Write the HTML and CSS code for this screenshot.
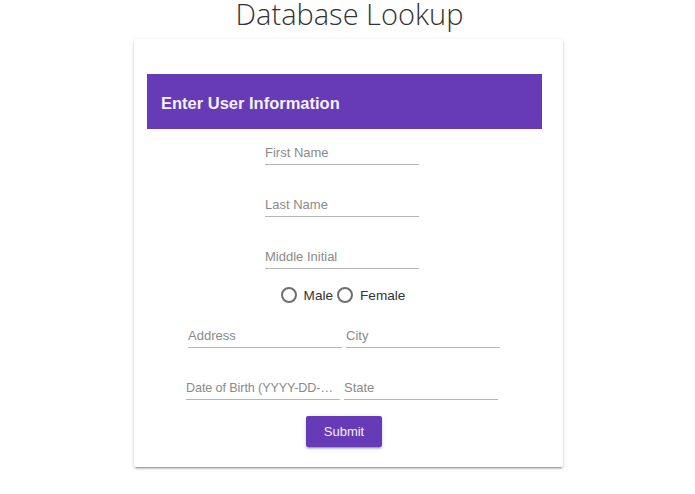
FILE: index.html
```html
<!DOCTYPE html>
<html>
<head>
<meta charset="utf-8">
<link rel="stylesheet" href="styles.css">
</head>
<body>
<h1 class="title">Database Lookup</h1>
<div class="card">
  <div class="card-header">Enter User Information</div>
  <div class="form">
    <div class="field first"><span class="label">First Name</span></div>
    <div class="field gap"><span class="label">Last Name</span></div>
    <div class="field gap"><span class="label">Middle Initial</span></div>
    <div class="radios">
      <span class="radio"></span><span class="radio-label">Male</span>
      <span class="radio"></span><span class="radio-label">Female</span>
    </div>
    <div class="pair pair-a">
      <div class="field"><span class="label">Address</span></div>
      <div class="field"><span class="label">City</span></div>
    </div>
    <div class="pair pair-b">
      <div class="field dob"><span class="label">Date of Birth (YYYY-DD-MM)</span></div>
      <div class="field"><span class="label">State</span></div>
    </div>
    <button class="submit">Submit</button>
  </div>
</div>
</body>
</html>
```
FILE: styles.css
```css
html, body {
  margin: 0;
  padding: 0;
  background: #ffffff;
}
body {
  font-family: "Liberation Sans", Arial, sans-serif;
  width: 695px;
  height: 494px;
  overflow: hidden;
}
.title {
  margin: 0;
  height: 39px;
  font-family: "Open Sans", sans-serif;
  font-weight: 300;
  font-size: 29px;
  line-height: 28px;
  color: #333;
  text-align: center;
  padding-left: 4px;
  box-sizing: border-box;
}
.card {
  margin-left: 134px;
  width: 429px;
  height: 428px;
  box-sizing: border-box;
  padding: 35px 21px 0 13px;
  background: #fff;
  border-radius: 2px;
  box-shadow: 0 2px 2px rgba(0,0,0,0.14), 0 1px 5px rgba(0,0,0,0.12), 0 3px 1px -2px rgba(0,0,0,0.2);
}
.card-header {
  height: 55px;
  box-sizing: border-box;
  padding-top: 3px;
  background: #673ab7;
  color: #f4f0fa;
  font-size: 16.5px;
  font-weight: 700;
  line-height: 52px;
  padding-left: 14px;
}
.form {
  display: flex;
  flex-direction: column;
  align-items: center;
  padding-right: 5px;
}
.field {
  width: 154px;
  height: 21px;
  box-sizing: border-box;
  padding-top: 1px;
  padding-bottom: 3px;
  border-bottom: 1px solid #b5b5b5;
  font-size: 13px;
  line-height: 16px;
  color: #8a8a8a;
  white-space: nowrap;
  overflow: hidden;
  text-overflow: ellipsis;
}
.field .label {
  white-space: nowrap;
}
.dob {
  font-size: 12.6px;
  letter-spacing: -0.1px;
}
.first {
  margin-top: 15px;
}
.gap {
  margin-top: 31px;
}
.radios {
  margin-top: 18px;
  height: 16px;
  display: flex;
  align-items: center;
  font-size: 13.6px;
  color: #333;
  margin-left: 6px;
}
.radio {
  width: 16px;
  height: 16px;
  box-sizing: border-box;
  border: 2px solid #6e6e6e;
  border-radius: 50%;
  margin-right: 7px;
}
.radio-label {
  margin-right: 4px;
}
.pair {
  display: flex;
  gap: 4px;
}
.pair-a {
  margin-top: 24px;
  margin-left: 4px;
}
.pair-b {
  margin-top: 31px;
}
.submit {
  margin-top: 16px;
  width: 76px;
  height: 31px;
  border: none;
  border-radius: 2px;
  background: #673ab7;
  color: #f4f0fa;
  font-family: "Liberation Sans", Arial, sans-serif;
  font-size: 13px;
  box-shadow: 0 2px 2px rgba(0,0,0,0.14), 0 1px 5px rgba(0,0,0,0.12), 0 3px 1px -2px rgba(0,0,0,0.2);
  margin-left: 4px;
}
```
